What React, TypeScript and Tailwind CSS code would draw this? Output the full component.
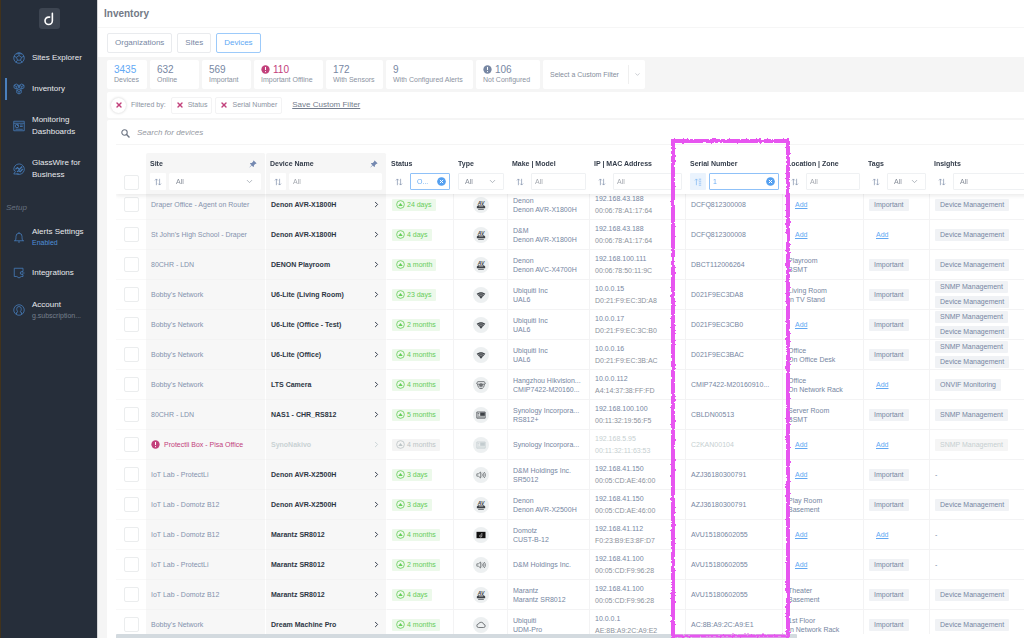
import React, { useEffect, useRef } from 'react';
import { ChevronDown, ChevronRight, X } from 'lucide-react';
import clsx from 'clsx';

type DeviceType = 'av' | 'wifi' | 'camera' | 'nas' | 'speaker' | 'box' | 'cloud';

interface Device {
    site: string;
    name: string;
    status: string;
    type: DeviceType;
    make: string[];
    ip: string;
    mac: string;
    serial: string;
    location?: string[];
    important?: boolean;
    insights: string[];
    offline?: boolean;
}

const DM = 'Device Management';
const SNMP = 'SNMP Management';

const devices: Device[] = [
    { site: 'Draper Office - Agent on Router', name: 'Denon AVR-X1800H', status: '24 days', type: 'av', make: ['Denon', 'Denon AVR-X1800H'], ip: '192.168.43.188', mac: '00:06:78:A1:17:64', serial: 'DCFQ812300008', important: true, insights: [DM] },
    { site: "St John's High School - Draper", name: 'Denon AVR-X1800H', status: '4 days', type: 'av', make: ['D&M', 'Denon AVR-X1800H'], ip: '192.168.43.188', mac: '00:06:78:A1:17:64', serial: 'DCFQ812300008', insights: [DM] },
    { site: '80CHR - LDN', name: 'DENON Playroom', status: 'a month', type: 'av', make: ['Denon', 'Denon AVC-X4700H'], ip: '192.168.100.111', mac: '00:06:78:50:11:9C', serial: 'DBCT112006264', location: ['Playroom', 'BSMT'], important: true, insights: [DM] },
    { site: "Bobby's Network", name: 'U6-Lite (Living Room)', status: '23 days', type: 'wifi', make: ['Ubiquiti Inc', 'UAL6'], ip: '10.0.0.15', mac: 'D0:21:F9:EC:3D:A8', serial: 'D021F9EC3DA8', location: ['Living Room', 'In TV Stand'], important: true, insights: [SNMP, DM] },
    { site: "Bobby's Network", name: 'U6-Lite (Office - Test)', status: '2 months', type: 'wifi', make: ['Ubiquiti Inc', 'UAL6'], ip: '10.0.0.17', mac: 'D0:21:F9:EC:3C:B0', serial: 'D021F9EC3CB0', important: true, insights: [SNMP, DM] },
    { site: "Bobby's Network", name: 'U6-Lite (Office)', status: '4 months', type: 'wifi', make: ['Ubiquiti Inc', 'UAL6'], ip: '10.0.0.16', mac: 'D0:21:F9:EC:3B:AC', serial: 'D021F9EC3BAC', location: ['Office', 'On Office Desk'], important: true, insights: [SNMP, DM] },
    { site: "Bobby's Network", name: 'LTS Camera', status: '4 months', type: 'camera', make: ['Hangzhou Hikvision...', 'CMIP7422-M20160...'], ip: '10.0.0.112', mac: 'A4:14:37:38:FF:FD', serial: 'CMIP7422-M20160910...', location: ['Office', 'On Network Rack'], insights: ['ONVIF Monitoring'] },
    { site: '80CHR - LDN', name: 'NAS1 - CHR_RS812', status: '5 months', type: 'nas', make: ['Synology Incorpora...', 'RS812+'], ip: '192.168.100.100', mac: '00:11:32:19:56:F5', serial: 'CBLDN00513', location: ['Server Room', 'BSMT'], important: true, insights: [SNMP] },
    { site: 'Protectli Box - Pisa Office', name: 'SynoNakivo', status: '4 months', type: 'nas', make: ['Synology Incorpora...'], ip: '192.168.5.95', mac: '00:11:32:11:63:53', serial: 'C2KAN00104', insights: [SNMP], offline: true },
    { site: 'IoT Lab - ProtectLi', name: 'Denon AVR-X2500H', status: '3 days', type: 'speaker', make: ['D&M Holdings Inc.', 'SR5012'], ip: '192.168.41.150', mac: '00:05:CD:AE:46:00', serial: 'AZJ36180300791', important: true, insights: [] },
    { site: 'IoT Lab - Domotz B12', name: 'Denon AVR-X2500H', status: '3 days', type: 'av', make: ['Denon', 'Denon AVR-X2500H'], ip: '192.168.41.150', mac: '00:05:CD:AE:46:00', serial: 'AZJ36180300791', location: ['Play Room', 'Basement'], important: true, insights: [DM] },
    { site: 'IoT Lab - Domotz B12', name: 'Marantz SR8012', status: '4 months', type: 'box', make: ['Domotz', 'CUST-B-12'], ip: '192.168.41.112', mac: 'F0:23:B9:E3:8F:D7', serial: 'AVU15180602055', insights: [] },
    { site: 'IoT Lab - ProtectLi', name: 'Marantz SR8012', status: '2 months', type: 'speaker', make: ['D&M Holdings Inc.'], ip: '192.168.41.100', mac: '00:05:CD:F9:96:28', serial: 'AVU15180602055', important: true, insights: [] },
    { site: 'IoT Lab - Domotz B12', name: 'Marantz SR8012', status: '4 days', type: 'av', make: ['Marantz', 'Marantz SR8012'], ip: '192.168.41.100', mac: '00:05:CD:F9:96:28', serial: 'AVU15180602055', location: ['Theater', 'Basement'], important: true, insights: [DM] },
    { site: "Bobby's Network", name: 'Dream Machine Pro', status: '4 months', type: 'cloud', make: ['Ubiquiti', 'UDM-Pro'], ip: '10.0.0.1', mac: 'AE:8B:A9:2C:A9:E2', serial: 'AC:8B:A9:2C:A9:E1', location: ['1st Floor', 'In Network Rack'], important: true, insights: [DM] },
];

const stats = [
    { value: '3435', label: 'Devices', width: 'w-10', color: 'text-[#62a9f5]' },
    { value: '632', label: 'Online', width: 'w-[49px]', color: 'text-[#7787a3]' },
    { value: '569', label: 'Important', width: 'w-[49px]', color: 'text-[#7787a3]' },
    { value: '110', label: 'Important Offline', width: 'w-[69px]', color: 'text-[#c2407b]', alert: true },
    { value: '172', label: 'With Sensors', width: 'w-[57px]', color: 'text-[#7787a3]' },
    { value: '9', label: 'With Configured Alerts', width: 'w-[87px]', color: 'text-[#7787a3]' },
    { value: '106', label: 'Not Configured', width: 'w-16', color: 'text-[#7787a3]', alert: true },
];

/* ---------- Icons ---------- */

const AlertDot = ({ className }: { className?: string }) => (
    <svg viewBox="0 0 10 10" className={clsx('size-[9px] shrink-0', className)} fill="currentColor">
        <circle cx="5" cy="5" r="4.6" />
        <path d="M5 2.2v3.4M5 6.8v1.1" stroke="#fff" strokeWidth="1.1" />
    </svg>
);

const ClearDot = () => (
    <svg viewBox="0 0 10 10" className="size-[9px] shrink-0 text-[#539ff0]">
        <circle cx="5" cy="5" r="4.8" fill="currentColor" />
        <path d="M3.2 3.2l3.6 3.6M6.8 3.2L3.2 6.8" stroke="#fff" strokeWidth="1.1" />
    </svg>
);

const SortIcon = ({ sorted }: { sorted?: boolean }) => (
    <svg viewBox="0 0 10 10" className="size-2" fill="none" stroke="currentColor" strokeWidth="0.9">
        <path d="M3 9V1.2M1.2 3L3 1.2 4.8 3" />
        {sorted ? <path d="M6 1.5h3M6 4h3M6 6.5h3M6 9h3" /> : <path d="M7 1v7.8M5.2 7L7 8.8 8.8 7" />}
    </svg>
);

const PinIcon = () => (
    <svg viewBox="0 0 10 10" className="mr-1 size-2 text-[#7488b0]" fill="currentColor">
        <path d="M5.8 0.6L9.4 4.2 8.6 4.9 8 4.7 6.2 6.6 6.1 8.2 5.4 8.8 3.4 6.8 0.8 9.4 0.6 9.2 3 6.4 1.2 4.6 1.8 3.9 3.4 3.8 5.3 2 5.1 1.3z" />
    </svg>
);

const SearchIcon = () => (
    <svg viewBox="0 0 10 10" className="size-[9px] text-[#6d7583]" fill="none" stroke="currentColor">
        <circle cx="3.9" cy="3.9" r="3" strokeWidth="1.2" />
        <path d="M6.2 6.2L9.4 9.4" strokeWidth="1.5" />
    </svg>
);

const UpIcon = () => (
    <svg viewBox="0 0 10 10" className="size-[9px]">
        <circle cx="5" cy="5" r="4.3" fill="none" stroke="currentColor" strokeWidth="0.9" />
        <path d="M2.5 6.6L5 3.2 7.5 6.6z" fill="currentColor" />
    </svg>
);

const typeDrawings: Record<DeviceType, React.ReactNode> = {
    av: (
        <>
            <text x="6" y="5.4" textAnchor="middle" fontSize="6" fontWeight="bold" fontStyle="italic" fill="currentColor">AV</text>
            <path d="M2.6 6.2h6.8l1.6 1.6v2.2H1V7.8z" fill="currentColor" />
            <path d="M3.4 7.2h5.2" stroke="#edf0f1" strokeWidth="0.8" />
            <path d="M2.6 11.2h6.8" stroke="currentColor" strokeWidth="0.9" />
        </>
    ),
    wifi: (
        <>
            <path d="M0.8 4.6C3.8 2 8.2 2 11.2 4.6L6 10.4z" fill="currentColor" />
            <path d="M2.2 5.9C4.4 4.2 7.6 4.2 9.8 5.9M3.7 7.5C5.1 6.5 6.9 6.5 8.3 7.5" stroke="#edf0f1" strokeWidth="0.5" fill="none" />
        </>
    ),
    camera: (
        <g fill="none" stroke="currentColor" strokeWidth="0.8">
            <path d="M2.4 2h7.2c1 .4 1.600 1.200 1.600 2.400L9.800 5H2.200L.8 4.400C.8 3.200 1.400 2.400 2.400 2zM2 5c0 3 1.500 5.400 4 5.400S10 8 10 5" />
            <circle cx="6" cy="6.400" r="1.900" />
            <circle cx="6" cy="6.400" r="0.600" fill="currentColor" />
        </g>
    ),
    nas: (
        <>
            <path d="M1 2.400h10v7.400H1z" fill="none" stroke="currentColor" strokeWidth="0.9" />
            <path d="M5 3h5.600v4H5z" fill="currentColor" />
            <path d="M2 4.200h2M2 6h2M2 8.300h8" stroke="currentColor" strokeWidth="0.8" />
        </>
    ),
    speaker: (
        <path d="M1 4.600h1.800L5.600 2.400v7.200L2.800 7.400H1zM7 4.200c.8 1 .8 2.600 0 3.600M8.400 3.200c1.400 1.600 1.400 4 0 5.600M9.800 2.400c2 2.200 2 5 0 7.200" fill="none" stroke="currentColor" strokeWidth="0.7" />
    ),
    box: (
        <>
            <path d="M0.600 2.200h10.800v7.600H0.600z" fill="#111" />
            <path d="M7 3.600v3.600a1.300 1.300 0 1 1-1.300-1.300" fill="none" stroke="#fff" strokeWidth="0.7" />
        </>
    ),
    cloud: (
        <path d="M3.200 9h5.800a1.900 1.900 0 0 0 .3-3.800A3.300 3.300 0 0 0 3 4.800 2.100 2.100 0 0 0 3.200 9z" fill="none" stroke="currentColor" strokeWidth="0.8" />
    ),
};

const TypeIcon = ({ type, dim }: { type: DeviceType; dim?: boolean }) => (
    <span className={clsx('mx-auto flex size-4 items-center justify-center rounded-full bg-[#edf0f1]', dim ? 'text-[#c3cccf]' : 'text-[#3d4146]')}>
        <svg viewBox="0 0 12 12" className="size-[10px]">{typeDrawings[type]}</svg>
    </span>
);

const NavIcon = ({ children }: { children: React.ReactNode }) => (
    <svg viewBox="0 0 24 24" className="size-3 shrink-0 text-[#4479b4]" fill="none" stroke="currentColor" strokeWidth="1.7">
        {children}
    </svg>
);

/* ---------- Sidebar ---------- */

interface NavItemProps {
    lines: string[];
    note?: string;
    noteColor?: string;
    active?: boolean;
    children: React.ReactNode;
}

const NavItem = ({ lines, note, noteColor, active, children }: NavItemProps) => (
    <li>
        <a
            href="#"
            className={clsx('ml-[5px] flex items-center gap-[7px] border-l-2 py-[5px] pl-[6px]', active ? 'border-[#4a80be]' : 'border-transparent')}
        >
            <NavIcon>{children}</NavIcon>
            <span className="text-[8px] leading-[12px] text-[#e8eaed]">
                {lines.map((line) => <span key={line} className="block">{line}</span>)}
                {note && <span className={clsx('block text-[7px] leading-[9px]', noteColor)}>{note}</span>}
            </span>
        </a>
    </li>
);

const Sidebar = () => (
    <nav className="w-[97px] shrink-0 border-l border-[#40321c] bg-[#262e3a]">
        <div className="mx-auto mt-2 flex size-[21px] items-center justify-center rounded-[3px] bg-[#3d4551]">
            <svg viewBox="0 0 20 20" className="size-4" fill="none" stroke="#fff" strokeWidth="2" strokeLinecap="round">
                <path d="M14.2 3v9.2a4.6 4.6 0 1 1-4.6-4.6h1.2" />
            </svg>
        </div>

        <ul className="-ml-px mt-[18px] flex flex-col gap-[9px]">
            <NavItem lines={['Sites Explorer']}>
                <circle cx="12" cy="12" r="10.5" />
                <path d="M12 7l5 3.6-2 5.8H9l-2-5.8zM12 7V2M17 10.600l5-2M15 16.400l3.500 4.600M9 16.400L5.500 21M7 10.600L2 8.600M12 2l5 2.500M12 2L7 4.500" />
            </NavItem>
            <NavItem lines={['Inventory']} active>
                <path d="M6.500 2l4.500 2.500v5L6.500 12 2 9.500v-5zM17.500 2L22 4.500v5L17.500 12 13 9.500v-5zM12 12l4.500 2.500v5L12 22l-4.500-2.500v-5z" />
                <path d="M2 4.500L6.500 7 11 4.500M6.500 7v5M13 4.500L17.500 7 22 4.500M17.500 7v5M7.500 14.500L12 17l4.500-2.500M12 17v5" />
            </NavItem>
            <NavItem lines={['Monitoring', 'Dashboards']}>
                <path d="M1.500 2.500h21v19h-21zM1.500 6.500h21M14 10h5.500M14 13h5.500M5 18.500h14.500" />
                <circle cx="8" cy="12" r="3.500" />
                <path d="M8 12l2.500-2.500" />
            </NavItem>
            <NavItem lines={['GlassWire for', 'Business']}>
                <path d="M7 21.500A10.500 10.500 0 1 0 2 15c1.500 0 2.500.500 3 1.500L1.500 22H12" />
                <path d="M5 12.500l4-3.500 3.500 4 6-6M8 17.500l3.500-2 3 2 5-5.500" strokeWidth="2.400" />
            </NavItem>
        </ul>

        <p className="mt-[17px] pl-[5px] text-[8px] leading-[10px] text-[#66717f] italic">Setup</p>

        <ul className="-ml-px mt-2 flex flex-col gap-[10px]">
            <NavItem lines={['Alerts Settings']} note="Enabled" noteColor="text-[#4f8ed8]">
                <path d="M2 19.500h20M4.500 19.500c1-2 1.500-4 1.500-9a6 6 0 0 1 12 0c0 5 .500 7 1.500 9M12 4.500V2M10 22h4" />
            </NavItem>
            <NavItem lines={['Integrations']}>
                <path d="M20 9V2.500H2.500v16.500h5l4.500 3 4.500-3H20v-4M20 9h-2.500a3 3 0 1 0 0 6H20M17 12h6" />
            </NavItem>
            <NavItem lines={['Account']} note="g.subscription..." noteColor="text-[#76808d]">
                <circle cx="12" cy="12" r="10.500" />
                <path d="M7 20v-3l3-1.500C8 14 7.500 12 7.500 9.500a4.500 4.500 0 0 1 9 0c0 2.500-.500 4.500-2.500 6l3 1.500v3" />
            </NavItem>
        </ul>
    </nav>
);

/* ---------- Table ---------- */

interface HeadCellProps {
    title: string;
    control?: 'input' | 'select';
    value?: string;
    sort?: boolean;
    sorted?: boolean;
    pinned?: boolean;
}

const HeadCell = ({ title, control = 'input', value, sort = true, sorted, pinned }: HeadCellProps) => (
    <th scope="col" className={clsx('px-1 pt-[5px] pb-1 text-left align-top', pinned ? 'rounded-t-[2px] border-r border-white bg-[#f6f6f6]' : 'bg-white')}>
        <div className="flex items-center justify-between text-[7px] leading-[11px] font-bold text-[#333c4a]">
            {title}
            {pinned && <PinIcon />}
        </div>
        <div className="mt-1 flex h-[17px] gap-[3px] font-normal">
            {sort && (
                <button
                    type="button"
                    aria-label={`Sort by ${title}`}
                    className={clsx('flex w-4 shrink-0 items-center justify-center rounded-[1px]', sorted ? 'bg-[#eaf3fd] text-[#7db5f3]' : 'bg-white text-[#8594ae]')}
                >
                    <SortIcon sorted={sorted} />
                </button>
            )}
            {control === 'select' ? (
                <span className={clsx('relative min-w-0 flex-1 rounded-[1px] border bg-white', pinned ? 'border-white' : 'border-[#eff1f3]')}>
                    <select aria-label={title} className="size-full appearance-none pl-[6px] text-[7px] text-[#858c97]">
                        <option>All</option>
                    </select>
                    <ChevronDown className="pointer-events-none absolute top-[3px] right-[6px] size-[9px] text-[#9aa1ab]" strokeWidth={2} />
                </span>
            ) : (
                <span className={clsx('flex min-w-0 flex-1 items-center rounded-[1px] border bg-white pr-[3px]', value ? 'border-[#8fc1f8]' : pinned ? 'border-white' : 'border-[#eff1f3]')}>
                    <input
                        type="text"
                        aria-label={title}
                        placeholder="All"
                        defaultValue={value}
                        className={clsx('h-full w-full min-w-0 text-[7px] text-[#6cadf4] outline-none placeholder:text-[#a3a7ae]', value === 'O...' ? 'pl-[6px]' : 'pl-[3px]')}
                    />
                    {value && <ClearDot />}
                </span>
            )}
        </div>
    </th>
);

const Check = ({ label }: { label: string }) => (
    <input type="checkbox" aria-label={label} className="mx-auto block size-[15px] appearance-none rounded-[2px] border border-[#ebedee] bg-white" />
);

const Tag = ({ children, dim }: { children: React.ReactNode; dim?: boolean }) => (
    <span className={clsx('block w-fit rounded-[1px] px-[5px] text-[7px] leading-[12px]', dim ? 'bg-[#f5f5f5] text-[#c6cfd1]' : 'bg-[#f0f2f5] text-[#7686a2]')}>
        {children}
    </span>
);

const AddLink = () => <a href="#" className="ml-[7px] text-[#62a8f3] underline">Add</a>;

const DeviceRow = ({ device }: { device: Device }) => {
    const { offline } = device;
    const cell = 'border-b border-r border-[#f3f3f4] px-[5px]';
    const pinned = 'border-b border-b-[#f3f3f3] border-r border-r-white bg-[#f7f7f7] px-[5px]';

    return (
        <tr className="h-[30px] text-[#7686a2]">
            <td className="border-b border-[#f8f8f8]"><Check label={`Select ${device.name}`} /></td>
            <td className={clsx(pinned, offline ? 'text-[#c2407b]' : 'text-[#8492ad]')}>
                <span className="flex items-center gap-1">
                    {offline && <AlertDot />}
                    {device.site}
                </span>
            </td>
            <td className={clsx(pinned, 'font-bold', offline ? 'text-[#c9d2d4]' : 'text-[#2d3644]')}>
                <span className="flex items-center justify-between">
                    {device.name}
                    <ChevronRight className="size-[9px]" strokeWidth={2.5} />
                </span>
            </td>
            <td className={cell}>
                <span className={clsx('flex h-3 w-fit items-center gap-[2px] rounded-[1px] px-[4px]', offline ? 'bg-[#f4f4f4] text-[#bcc4c6]' : 'bg-[#ecf9ea] text-[#65cc58]')}>
                    <UpIcon />
                    {device.status}
                </span>
            </td>
            <td className="border-r border-b border-[#f3f3f4]"><TypeIcon type={device.type} dim={offline} /></td>
            <td className={cell}>
                {device.make.map((line) => <div key={line} className="truncate">{line}</div>)}
            </td>
            <td className={cell}>
                <div className={clsx('leading-[12px]', offline && 'text-[#c6cfd1]')}>{device.ip}</div>
                <div className={clsx('leading-[12px]', offline ? 'text-[#c6cfd1]' : 'text-[#8c919b]')}>{device.mac}</div>
            </td>
            <td className={clsx(cell, offline && 'text-[#c6cfd1]')}>{device.serial}</td>
            <td className={cell}>
                {device.location ? device.location.map((line) => <div key={line}>{line}</div>) : <AddLink />}
            </td>
            <td className={cell}>{device.important ? <Tag>Important</Tag> : <AddLink />}</td>
            <td className={cell}>
                <div className="flex flex-col gap-[3px]">
                    {device.insights.length > 0
                        ? device.insights.map((item) => <Tag key={item} dim={offline}>{item}</Tag>)
                        : '-'}
                </div>
            </td>
        </tr>
    );
};

const DeviceTable = () => {
    const scroller = useRef<HTMLDivElement>(null);

    // The list opens slightly scrolled under its sticky header
    useEffect(() => {
        if (scroller.current) scroller.current.scrollTop = 4;
    }, []);

    return (
        <div ref={scroller} className="min-h-0 flex-1 overflow-auto [scrollbar-width:none]">
            <table className="w-[980px] min-w-full table-fixed border-separate border-spacing-0 text-[7px] leading-[9px]">
                <colgroup>
                    <col className="w-[30px]" />
                    <col className="w-[120px]" />
                    <col className="w-[121px]" />
                    <col className="w-[67px]" />
                    <col className="w-[54px]" />
                    <col className="w-[82px]" />
                    <col className="w-[96px]" />
                    <col className="w-[97px]" />
                    <col className="w-[81px]" />
                    <col className="w-[66px]" />
                    <col />
                </colgroup>
                <thead className="sticky top-0 z-10 shadow-[0_2px_4px_rgba(0,0,0,0.08)]">
                    <tr>
                        <th className="bg-white pb-1 align-bottom"><Check label="Select all devices" /></th>
                        <HeadCell title="Site" control="select" pinned />
                        <HeadCell title="Device Name" pinned />
                        <HeadCell title="Status" value="O..." />
                        <HeadCell title="Type" control="select" sort={false} />
                        <HeadCell title="Make | Model" />
                        <HeadCell title="IP | MAC Address" />
                        <HeadCell title="Serial Number" value="1" sorted />
                        <HeadCell title="Location | Zone" />
                        <HeadCell title="Tags" control="select" />
                        <HeadCell title="Insights" control="select" />
                    </tr>
                </thead>
                <tbody>
                    {devices.map((device, i) => <DeviceRow key={i} device={device} />)}
                </tbody>
            </table>
        </div>
    );
};

/* ---------- Page ---------- */

const Tab = ({ label, active }: { label: string; active?: boolean }) => (
    <button
        type="button"
        className={clsx('h-5 rounded-[2px] border bg-white px-[7px] text-[8px]', active ? 'border-[#9ccafa] text-[#5ea7f4]' : 'border-[#e9ebee] text-[#7787a3]')}
    >
        {label}
    </button>
);

const FilterChip = ({ label }: { label: string }) => (
    <span className="flex h-[17px] items-center gap-1 rounded-[2px] border border-[#f3f3f4] px-1">
        <button type="button" aria-label={`Remove ${label} filter`} className="text-[#c2407b]">
            <X className="size-2" strokeWidth={4} />
        </button>
        {label}
    </span>
);

// Hand drawn marker frame around the serial number column
const MarkerFrame = () => (
    <svg className="pointer-events-none absolute top-[138px] left-[573px] z-20 h-[calc(100%-138px)] w-[120px]" overflow="visible">
        <filter id="marker-edge" x="-10%" y="-10%" width="120%" height="120%">
            <feTurbulence type="fractalNoise" baseFrequency="0.35" numOctaves="2" seed="4" />
            <feDisplacementMap in="SourceGraphic" scale="3" xChannelSelector="R" yChannelSelector="G" />
        </filter>
        <g fill="none" stroke="#e755f0" strokeWidth="4" filter="url(#marker-edge)">
            <line x1="0" y1="3" x2="118" y2="3" />
            <line x1="2" y1="1" x2="2" y2="100%" />
            <line x1="117" y1="3" x2="117" y2="100%" />
            <svg y="100%" overflow="visible">
                <line x1="0" y1="-2" x2="119" y2="-2" strokeWidth="3" />
            </svg>
        </g>
    </svg>
);

export default function App() {
    return (
        <div className="flex h-screen overflow-hidden bg-[#f5f5f5] font-['Liberation_Sans',Arial,sans-serif]">
            <Sidebar />

            <main className="relative flex min-w-0 flex-1 flex-col border-l border-[#d5d6d8]">
                <header className="bg-white">
                    <h1 className="border-b border-[#f6f6f6] pl-[6px] text-[10px] leading-[27px] font-bold text-[#737985]">Inventory</h1>
                    <div className="flex gap-[5px] pt-[5px] pb-1 pl-[9px]">
                        <Tab label="Organizations" />
                        <Tab label="Sites" />
                        <Tab label="Devices" active />
                    </div>
                </header>

                {/* Counters */}
                <section className="flex gap-[3px] pt-[3px] pl-[9px]">
                    {stats.map((stat) => (
                        <button
                            key={stat.label}
                            type="button"
                            className={clsx('flex h-[29px] shrink-0 flex-col justify-center rounded-[2px] bg-white pl-[7px] text-left whitespace-nowrap', stat.width)}
                        >
                            <span className={clsx('flex items-center gap-[3px] text-[10px] leading-[11px]', stat.color)}>
                                {stat.alert && <AlertDot />}
                                {stat.value}
                            </span>
                            <span className="text-[7px] leading-[10px] text-[#8b93a1]">{stat.label}</span>
                        </button>
                    ))}
                    <span className="relative h-[29px] w-[102px] shrink-0 rounded-[2px] bg-white">
                        <select aria-label="Custom filter" className="size-full appearance-none pl-[7px] text-[7px] text-[#858d9b]">
                            <option>Select a Custom Filter</option>
                        </select>
                        <span className="pointer-events-none absolute inset-y-[5px] right-0 flex w-[17px] items-center justify-center border-l border-[#efefef]">
                            <ChevronDown className="size-[7px] text-[#a5abb4]" strokeWidth={2} />
                        </span>
                    </span>
                </section>

                {/* Active filters */}
                <section className="mt-[3px] ml-[9px] flex h-[26px] items-center rounded-l-[2px] bg-white pl-1 text-[7px] text-[#8b93a1]">
                    <button type="button" aria-label="Clear all filters" className="flex size-[15px] items-center justify-center rounded-full bg-white text-[#c2407b] shadow-[0_0_3px_rgba(0,0,0,0.2)]">
                        <X className="size-2" strokeWidth={4} />
                    </button>
                    <span className="mr-[5px] ml-[5px]">Filtered by:</span>
                    <span className="flex gap-[3px]">
                        <FilterChip label="Status" />
                        <FilterChip label="Serial Number" />
                    </span>
                    <a href="#" className="ml-[10px] text-[8px] text-[#737c8c] underline">Save Custom Filter</a>
                </section>

                {/* Device list */}
                <section className="mt-[2px] ml-[9px] flex min-h-0 flex-1 flex-col rounded-tl-[2px] bg-white pl-[9px]">
                    <label className="mb-2 flex h-[25px] shrink-0 items-center gap-[7px] border-b border-[#f5f5f5] pt-[2px] pl-[5px]">
                        <SearchIcon />
                        <input type="search" aria-label="Search for devices" placeholder="Search for devices" className="flex-1 text-[8px] italic outline-none placeholder:text-[#9599a1]" />
                    </label>
                    <DeviceTable />
                    <div className="h-1 w-3/4 shrink-0 rounded-t-[1px] bg-[#d3dadf]" />
                </section>

                <MarkerFrame />
            </main>
        </div>
    );
}
